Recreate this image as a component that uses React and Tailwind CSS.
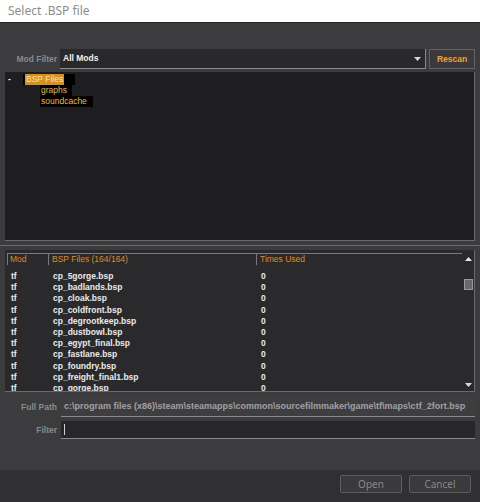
import React from "react";

const files = [
  "cp_5gorge.bsp",
  "cp_badlands.bsp",
  "cp_cloak.bsp",
  "cp_coldfront.bsp",
  "cp_degrootkeep.bsp",
  "cp_dustbowl.bsp",
  "cp_egypt_final.bsp",
  "cp_fastlane.bsp",
  "cp_foundry.bsp",
  "cp_freight_final1.bsp",
  "cp_gorge.bsp",
];

const Arrow = ({ down }) => (
  <svg width="7" height="4" viewBox="0 0 7 4">
    {down ? (
      <polygon points="0,0 7,0 3.5,4" fill="#d8d8d8" />
    ) : (
      <polygon points="0,4 7,4 3.5,0" fill="#e8e8e8" />
    )}
  </svg>
);

const App = () => {
  return (
    <div className="w-[480px] h-[502px] bg-[#3c3b3d] flex flex-col font-['Liberation_Sans',Arial,sans-serif] text-[8.5px] font-bold overflow-hidden">
      <div className="h-[23px] bg-white border-b border-[#2a292b] flex items-center pl-[8px] text-[12px] font-normal text-[#8c8c8c] font-['Noto_Sans',sans-serif]">
        Select .BSP file
      </div>

      <div className="flex-1 flex flex-col pt-[26px]">
        {/* mod filter */}
        <div className="flex h-[20px] px-[5px]">
          <div className="w-[52px] flex items-center justify-end text-[#8a898b]">Mod Filter</div>
          <div className="ml-[3px] w-[366px] bg-[#29282a] border-r border-b border-[#8a898b] flex items-center justify-between pl-[3px] pr-[4px] text-[#f2f2f2]">
            <span>All Mods</span>
            <Arrow down />
          </div>
          <button className="ml-[3px] flex-1 border border-[#626163] bg-[#3a393b] text-[#f0a232] flex items-center justify-center">
            Rescan
          </button>
        </div>

        {/* tree */}
        <div className="mt-[3px] mx-[5px] h-[169px] bg-[#1e1d1f] border-r border-b border-[#6a696b] pt-[2px] pl-[3px] font-normal text-[#e8b84e]">
          <div className="flex items-center h-[11px]">
            <span className="w-[15px] text-[#f0f0f0] font-bold">-</span>
            <span className="bg-black pl-[2px] pr-[11px] h-[11px] flex items-center">
              <span className="bg-[#d98e22] text-[#ffe29a] px-[1px] leading-[11px]">BSP Files</span>
            </span>
          </div>
          <div className="flex items-center h-[11px] pl-[32px]">
            <span className="bg-black pl-[1px] pr-[5px] leading-[11px]">graphs</span>
          </div>
          <div className="flex items-center h-[11px] pl-[32px]">
            <span className="bg-black pl-[1px] pr-[6px] leading-[11px]">soundcache</span>
          </div>
        </div>

        <div className="mt-[4px] h-px bg-[#6a696b]" />

        {/* list */}
        <div className="mt-[4px] mx-[5px] h-[142px] bg-[#2a292b] border-r border-b border-[#6a696b] flex overflow-hidden">
          <div className="flex-1 pl-[2px] pt-[3px]">
            <div className="grid grid-cols-[41px_208px_1fr] h-[11px] font-normal text-[#dc8c2c]">
              <div className="border-l border-t border-[#7a797b] pl-[2px] leading-[11px]">Mod</div>
              <div className="border-l border-t border-[#7a797b] pl-[3px] leading-[11px]">BSP Files (164/164)</div>
              <div className="border-l border-t border-[#7a797b] pl-[3px] leading-[11px]">Times Used</div>
            </div>
            <div className="mt-[7px] text-[#ebebeb]">
              {files.map((f) => (
                <div key={f} className="grid grid-cols-[41px_208px_1fr] h-[11.2px] leading-[11.2px]">
                  <div className="pl-[4px]">tf</div>
                  <div className="pl-[5px]">{f}</div>
                  <div className="pl-[5px]">0</div>
                </div>
              ))}
            </div>
          </div>
          <div className="w-[12px] flex flex-col items-center pt-[7px] pb-[4px]">
            <Arrow />
            <div className="mt-[18px] w-[9px] h-[11px] bg-[#6a696b] border border-[#9a999b]" />
            <div className="flex-1" />
            <Arrow down />
          </div>
        </div>

        {/* full path */}
        <div className="mt-[6px] flex h-[19px] px-[5px]">
          <div className="w-[52px] flex items-center justify-end text-[#8a898b]">Full Path</div>
          <div className="ml-[4px] flex-1 bg-[#3e3d3f] border-b border-[#8a898b] flex items-center pl-[3px] text-[9px] text-[#a2a1a3] whitespace-nowrap overflow-hidden">
            c:\program files (x86)\steam\steamapps\common\sourcefilmmaker\game\tf\maps\ctf_2fort.bsp
          </div>
        </div>

        {/* filter */}
        <div className="mt-[4px] flex h-[18px] px-[5px]">
          <div className="w-[52px] flex items-center justify-end text-[#8a898b]">Filter</div>
          <div className="ml-[4px] flex-1 bg-[#272628] border-b border-[#8a898b] flex items-center pl-[3px]">
            <div className="w-px h-[11px] bg-[#d0d0d0]" />
          </div>
        </div>
      </div>

      {/* bottom */}
      <div className="h-[32px] bg-[#302f31] flex justify-end items-start pt-[5px] pr-[9px] gap-[7px] font-normal font-['Noto_Sans',sans-serif] text-[10px] text-[#8a898b]">
        <button className="w-[62px] h-[18px] rounded-[2px] border border-[#5e5d5f] bg-[#3a393b] flex items-center justify-center">
          Open
        </button>
        <button className="w-[62px] h-[18px] rounded-[2px] border border-[#5e5d5f] bg-[#3a393b] flex items-center justify-center">
          Cancel
        </button>
      </div>
    </div>
  );
};

export default App;
